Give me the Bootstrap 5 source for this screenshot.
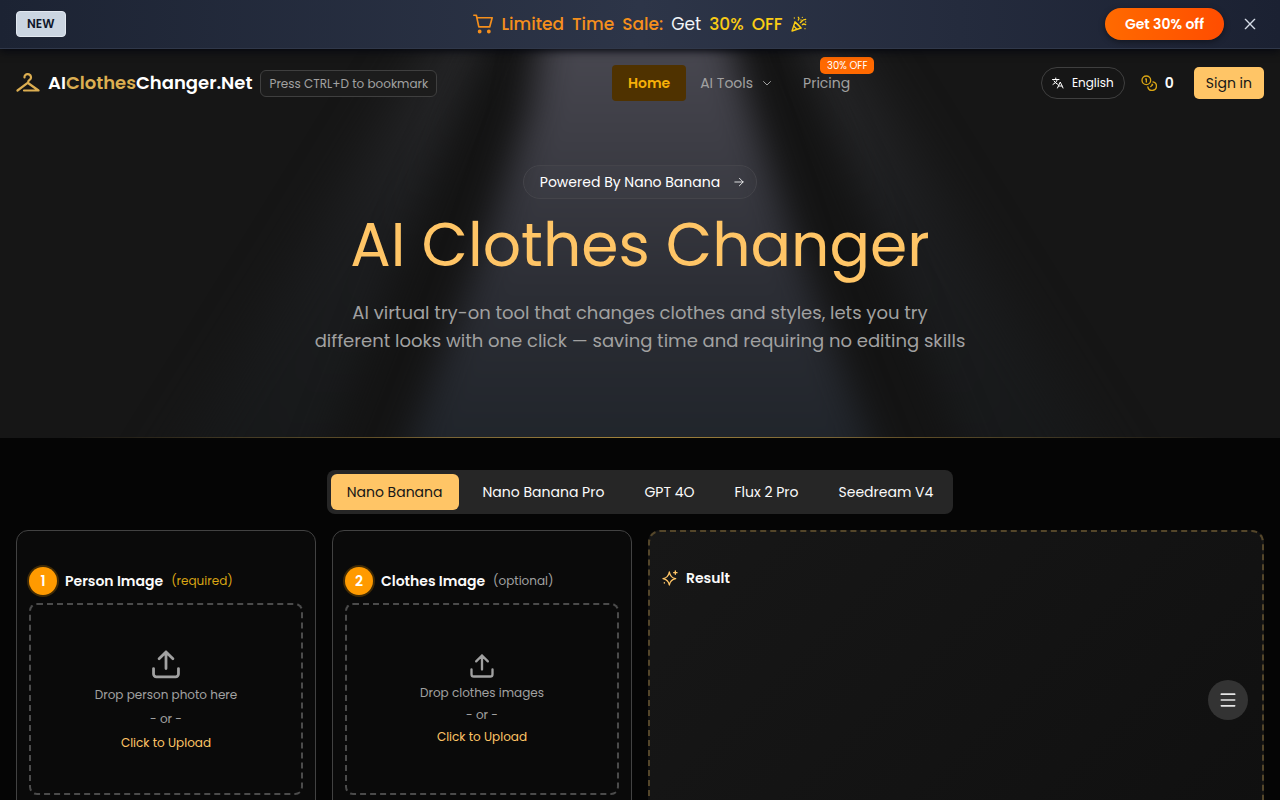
<!DOCTYPE html>
<html lang="en" data-bs-theme="dark">
<head>
<meta charset="utf-8">
<meta name="viewport" content="width=device-width, initial-scale=1">
<title>AI Clothes Changer</title>
<link href="https://cdn.jsdelivr.net/npm/bootstrap@5.3.0/dist/css/bootstrap.min.css" rel="stylesheet">
<style>
  :root { --gold: #ffc566; --soft: #a1a1a1; --hair: #3f3f3f; }
  body { font-family: Poppins, Inter, "Noto Sans", sans-serif; font-size: 14px; line-height: 20px; background: #050505; color: #fafafa; }
  svg { display: block; flex: none; }
  .stroke { fill: none; stroke: currentColor; stroke-width: 2; stroke-linecap: round; stroke-linejoin: round; }
  a { text-decoration: none; }
  .t-soft { color: var(--soft); }
  .t-gold { color: var(--gold); }
  .t-brand { color: #dcae51; }
  .t-coin { color: #d9a514; }
  .t-note { font-size: 12px; }
  .medium { font-weight: 500; }

  .promo { background: linear-gradient(90deg, #1c2333, #2d3548 50%, #1b2132); border-bottom: 1px solid #30384a; box-shadow: 0 2px 8px #05070f; position: relative; z-index: 2; }
  .promo-inner { display: grid; grid-template-columns: 1fr auto 1fr; min-height: 48px; }
  .tag-new { background: #cbd5e1; color: #0f172a; border: 1px solid #e2e8f0; border-radius: 4px; font-size: 12px; line-height: 16px; padding: 4px 10px; }
  .promo-text { font-size: 17px; line-height: 24px; color: #f58f1c; }
  .promo-text .off { color: #facc15; }
  .promo-text .get { color: #f1f5f9; font-weight: 400; }
  .promo-actions { gap: 12px; }
  .btn-deal { background: linear-gradient(90deg, #ff6a00, #ff4d00); color: #fff; border: 0; border-radius: 16px; padding: 6px 20px; box-shadow: 0 2px 6px #0006; }
  .btn-plain { background: none; border: 0; padding: 6px; color: #d5dbe6; }

  .stage { position: relative; background: #161616; overflow: hidden; }
  .beams { position: absolute; inset: 0; width: 100%; height: 100%; }
  .stage-body { position: relative; }
  .glow-line { height: 1px; background: linear-gradient(90deg, transparent 5%, #a5843c 50%, transparent 95%); }

  .topbar { padding: 16px 16px 0; min-height: 52px; }
  .brand-name { font-size: 18px; line-height: 28px; color: #fff; }
  .hint { border: 1px solid var(--hair); border-radius: 6px; background: #1c1c1c; font-size: 12px; line-height: 17px; padding: 4px 8px; }
  .menu-link { display: flex; align-items: center; gap: 8px; height: 36px; padding: 0 16px; color: var(--soft); border-radius: 4px; position: relative; }
  .menu-link.current { background: #4f3200; color: #f7b008; }
  .menu-link.tight { padding: 0 14px; }
  .sale-flag { position: absolute; top: -8px; left: 33px; background: #ff6900; color: #fff; font-size: 10px; line-height: 17px; padding: 0 7px; border-radius: 5px; white-space: nowrap; }
  .btn-lang { border: 1px solid var(--hair); background: none; color: #fff; border-radius: 16px; height: 32px; padding: 0 10px; font-size: 12px; gap: 8px; }
  .btn-sign { background: var(--gold); color: #171717; border: 0; border-radius: 5px; height: 32px; padding: 0 12px; }

  .hero { padding: 64px 16px 82px; }
  .pill { border: 1px solid #44444a; border-radius: 17px; padding: 6px 12px 6px 16px; color: #fff; gap: 14px; background: #ffffff05; }
  .headline { font-size: 60px; line-height: 60px; font-weight: 400; }
  .subline { font-size: 18px; line-height: 28px; max-width: 654px; }

  .workspace { padding-top: 32px; }
  .switcher { background: #262626; border-radius: 8px; padding: 4px; gap: 8px; }
  .switcher button { border: 0; background: none; color: #fafafa; border-radius: 6px; height: 36px; padding: 0 16px; }
  .switcher button[aria-selected=true] { background: var(--gold); color: #171717; }

  .panel { border: 1px solid #424242; border-radius: 12px; background: #0a0a0a; padding: 36px 12px 24px; height: 100%; }
  .panel-result { border: 2px dashed #54462a; background: linear-gradient(135deg, #171717, #101010); }
  .step { width: 28px; height: 28px; border-radius: 50%; background: #ff9a00; color: #fff; box-shadow: 0 0 0 2px #402b06; }
  .drop { border: 2px dashed #4b4b4b; border-radius: 8px; background: none; width: 100%; height: 192px; font-size: 12px; line-height: 20px; cursor: pointer; }
  .drop.compact { line-height: 18px; }
  .fab { position: fixed; right: 32px; bottom: 80px; width: 40px; height: 40px; border: 0; border-radius: 50%; background: #333; color: #e5e5e5; z-index: 5; }
</style>
</head>
<body>

<aside class="promo" aria-label="Promotion">
  <div class="promo-inner align-items-center px-3">
    <div><span class="tag-new fw-semibold d-inline-block">NEW</span></div>
    <div class="promo-text d-flex align-items-center gap-2 medium">
      <svg class="stroke" width="20" height="20" viewBox="0 0 24 24"><path d="M1 1.500h3l3 14h13l3-11H5"/><circle cx="8" cy="21" r="1.300" fill="currentColor"/><circle cx="19" cy="21" r="1.300" fill="currentColor"/></svg>
      <span>Limited</span><span>Time</span><span>Sale:</span><span class="get">Get</span><span class="off">30%</span><span class="off">OFF</span>
      <svg class="stroke off" width="16" height="16" viewBox="0 0 24 24"><path d="M6 9 1.500 22.500 15 18z"/><path d="M6 9q5 3 9 9M4 15l5 5M14 10l3-3c2-2 3-1 5-2M11 6q2-2 0-4M17 13q2-2 5 0"/><path d="M5 3h.01M17 2h.01M22 9h.01M21 19h.01M15 6h.01"/></svg>
    </div>
    <div class="promo-actions d-flex align-items-center justify-content-end">
      <button class="btn-deal fw-semibold" type="button">Get 30% off</button>
      <button class="btn-plain" type="button" aria-label="Close"><svg class="stroke" width="16" height="16" viewBox="0 0 24 24"><path d="m5 5 14 14M19 5 5 19"/></svg></button>
    </div>
  </div>
</aside>

<div class="stage">
  <svg class="beams" viewBox="0 0 1280 388" preserveAspectRatio="none" aria-hidden="true">
    <defs>
      <linearGradient id="core" x1="0" y1="0" x2="0" y2="1"><stop offset="0" stop-color="#4e4d56"/><stop offset=".3" stop-color="#3e3e46"/><stop offset=".6" stop-color="#2c2e35"/><stop offset="1" stop-color="#1d2228"/></linearGradient>
      <linearGradient id="side" x1="0" y1="0" x2="0" y2="1"><stop offset="0" stop-color="#2b2b2d"/><stop offset=".5" stop-color="#1c1d1f"/><stop offset="1" stop-color="#161819"/></linearGradient>
      <filter id="wide" x="-20%" y="-20%" width="140%" height="140%" color-interpolation-filters="sRGB"><feGaussianBlur stdDeviation="30 10"/></filter>
      <filter id="near" x="-20%" y="-20%" width="140%" height="140%" color-interpolation-filters="sRGB"><feGaussianBlur stdDeviation="18 10"/></filter>
    </defs>
    <path filter="url(#wide)" fill="url(#side)" d="M470-60H810L1120 440H160z"/>
    <path filter="url(#near)" fill="#141414" d="M505-60H775L980 440H310z"/>
    <path filter="url(#near)" fill="url(#core)" d="M550-60H715L750 60L790 180Q830 290 890 440H390Q450 290 490 180L530 60z"/>
  </svg>
  <div class="stage-body">
    <header class="topbar d-flex align-items-center justify-content-between">
      <div class="d-flex align-items-center gap-2">
        <a href="#" class="d-flex align-items-center gap-2">
          <svg class="stroke t-brand" width="24" height="20" viewBox="0 0 24 20"><path stroke-width="2.200" d="M8.500 4.500a3 3 0 0 1 3.300-3.300c3.500.3 4 4 2 5.500-1.300 1-1.800 1.500-1.800 3L1.500 17.500M12 10l10.500 7.500H8"/></svg>
          <span class="brand-name fw-semibold">AI<span class="t-brand">Clothes</span>Changer.Net</span>
        </a>
        <span class="hint t-soft text-nowrap">Press CTRL+D to bookmark</span>
      </div>
      <nav class="d-flex" aria-label="Main">
        <a href="#" class="menu-link current fw-semibold">Home</a>
        <a href="#" class="menu-link tight">AI Tools <svg class="stroke" width="12" height="12" viewBox="0 0 24 24"><path d="m5 9 7 7 7-7"/></svg></a>
        <a href="#" class="menu-link">Pricing<span class="sale-flag">30% OFF</span></a>
      </nav>
      <div class="d-flex align-items-center">
        <button type="button" class="btn-lang d-flex align-items-center"><svg class="stroke" width="12" height="12" viewBox="0 0 24 24"><path d="M1 5h13M7.500 2v3M11 5q-2 7-9 10M4 8q3 5 8 7M11 22l5.500-12L22 22M13 18h7"/></svg>English</button>
        <span class="d-flex align-items-center gap-2 fw-semibold ms-3 me-3 pe-1">
          <svg class="stroke t-coin" width="16" height="16" viewBox="0 0 24 24"><circle cx="8" cy="8" r="6.500"/><path d="M18 10.300A6.500 6.500 0 1 1 10.300 18M7 6h1v4.500M16.700 13.900l.7.700-2.800 2.800"/></svg>0</span>
        <button type="button" class="btn-sign">Sign in</button>
      </div>
    </header>
    <main class="hero d-flex flex-column align-items-center text-center">
      <a href="#" class="pill d-flex align-items-center">Powered By Nano Banana <svg class="stroke" width="10" height="10" viewBox="0 0 24 24"><path d="M2 12h20M13 3l9 9-9 9"/></svg></a>
      <h1 class="headline t-gold mt-3 mb-4">AI Clothes Changer</h1>
      <p class="subline t-soft mb-0">AI virtual try-on tool that changes clothes and styles, lets you try different looks with one click — saving time and requiring no editing skills</p>
    </main>
    <div class="glow-line"></div>
  </div>
</div>

<section class="workspace container-fluid px-3 pb-4">
  <div class="d-flex justify-content-center mb-3">
    <div class="switcher d-flex" role="tablist">
      <button type="button" role="tab" aria-selected="true">Nano Banana</button>
      <button type="button" role="tab" aria-selected="false">Nano Banana Pro</button>
      <button type="button" role="tab" aria-selected="false">GPT 4O</button>
      <button type="button" role="tab" aria-selected="false">Flux 2 Pro</button>
      <button type="button" role="tab" aria-selected="false">Seedream V4</button>
    </div>
  </div>
  <div class="row gx-3">
    <div class="col-3">
      <div class="panel">
        <div class="d-flex align-items-center gap-2 mb-2">
          <span class="step d-flex align-items-center justify-content-center fw-semibold">1</span>
          <span class="fw-semibold">Person Image</span><span class="t-note t-coin">(required)</span>
        </div>
        <button type="button" class="drop d-flex flex-column align-items-center justify-content-center gap-1">
          <svg class="stroke t-soft" width="36" height="36" viewBox="-1 -2 26 26"><path d="M3 15v4a2 2 0 0 0 2 2h14a2 2 0 0 0 2-2v-4M7 8l5-5 5 5M12 3v12"/></svg>
          <span class="t-soft">Drop person photo here</span><span class="t-soft">- or -</span><span class="t-gold">Click to Upload</span>
        </button>
      </div>
    </div>
    <div class="col-3">
      <div class="panel">
        <div class="d-flex align-items-center gap-2 mb-2">
          <span class="step d-flex align-items-center justify-content-center fw-semibold">2</span>
          <span class="fw-semibold">Clothes Image</span><span class="t-note t-soft">(optional)</span>
        </div>
        <button type="button" class="drop compact d-flex flex-column align-items-center justify-content-center gap-1">
          <svg class="stroke t-soft" width="28" height="28" viewBox="0 0 24 24"><path d="M3 15v4a2 2 0 0 0 2 2h14a2 2 0 0 0 2-2v-4M7 8l5-5 5 5M12 3v12"/></svg>
          <span class="t-soft">Drop clothes images</span><span class="t-soft">- or -</span><span class="t-gold">Click to Upload</span>
        </button>
      </div>
    </div>
    <div class="col-6">
      <div class="panel panel-result">
        <div class="d-flex align-items-center gap-2">
          <svg class="stroke t-gold" width="16" height="16" viewBox="0 0 24 24"><path d="M11 3q1.500 8.500 9.500 10-8 1.500-9.500 9.500Q9.500 14.500 1.500 13 9.500 11.500 11 3zM20 1.500v5M17.500 4h5M3.500 19v.5"/></svg>
          <span class="fw-semibold">Result</span>
        </div>
      </div>
    </div>
  </div>
</section>

<button class="fab d-flex align-items-center justify-content-center" type="button" aria-label="Menu"><svg class="stroke" width="20" height="20" viewBox="0 0 24 24"><path d="M4 5h16M4 12h16M4 19h16"/></svg></button>

<script src="https://cdn.jsdelivr.net/npm/bootstrap@5.3.0/dist/js/bootstrap.bundle.min.js"></script>
</body>
</html>
